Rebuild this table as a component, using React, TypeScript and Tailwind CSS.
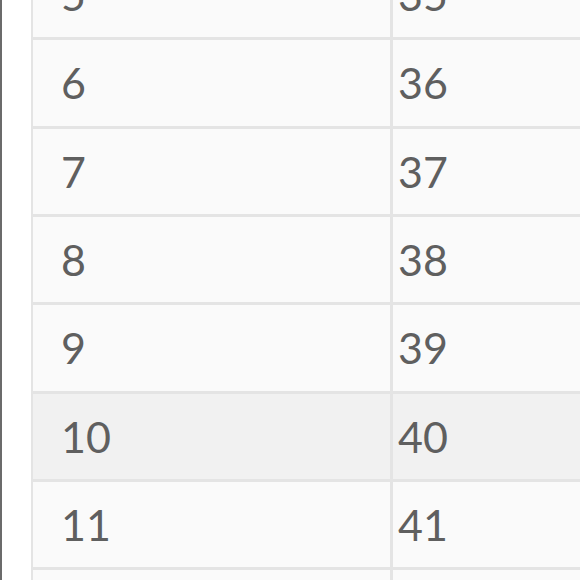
const rows = [5, 6, 7, 8, 9, 10, 11, 12];

export default function App() {
  return (
    <div className="flex h-[580px] w-[580px] overflow-hidden bg-white font-['Lato',sans-serif] text-[#5f5f5f]">
      <div className="w-[2px] shrink-0 bg-[#6b6b6b]" />
      <div className="w-[29px] shrink-0" />
      <div className="-mt-[48px] flex-1">
        {rows.map((n) => (
          <div
            key={n}
            className={`flex h-[88.33px] border-b-[3px] border-[#e4e4e4] ${n === 10 ? "bg-[#f1f1f1]" : "bg-[#fafafa]"}`}
          >
            <div className="flex w-[362px] shrink-0 items-center border-x-[3px] border-l-2 border-[#e4e4e4] pl-[28px] text-[43px] leading-none">
              {n}
            </div>
            <div className="flex flex-1 items-center pl-[5px] text-[43px] leading-none">
              {n + 30}
            </div>
          </div>
        ))}
      </div>
    </div>
  );
}
